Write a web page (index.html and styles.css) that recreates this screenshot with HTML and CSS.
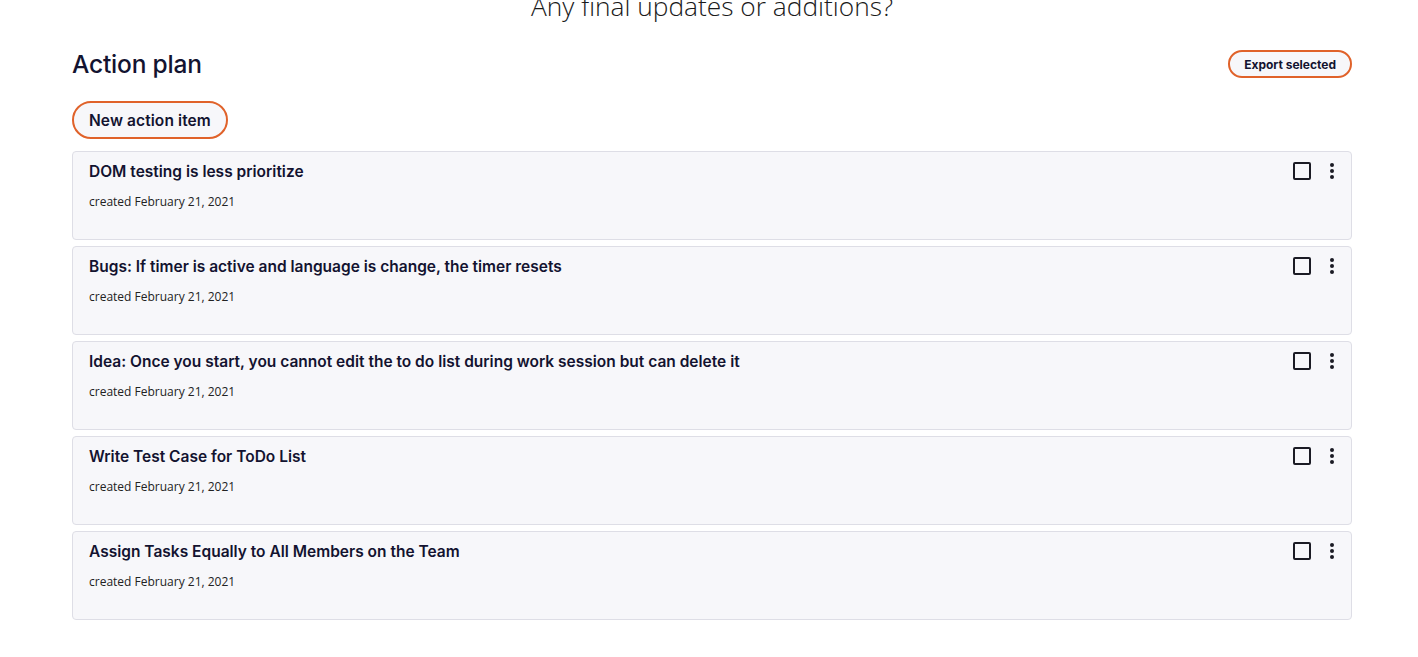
FILE: index.html
```html
<!DOCTYPE html>
<html lang="en">
<head>
<meta charset="utf-8">
<title>Action plan</title>
<link rel="stylesheet" href="styles.css">
</head>
<body>
<div class="page">
  <h2 class="question">Any final updates or additions?</h2>
  <section class="plan">
    <div class="plan-head">
      <h1 class="plan-title">Action plan</h1>
      <button class="pill pill-small">Export selected</button>
    </div>
    <button class="pill pill-large">New action item</button>
    <ul class="items">
      <li class="item">
        <div class="item-body">
          <div class="item-title">DOM testing is less prioritize</div>
          <div class="item-date">created February 21, 2021</div>
        </div>
        <div class="item-actions"><span class="check"></span><span class="kebab"><i></i><i></i><i></i></span></div>
      </li>
      <li class="item">
        <div class="item-body">
          <div class="item-title">Bugs: If timer is active and language is change, the timer resets</div>
          <div class="item-date">created February 21, 2021</div>
        </div>
        <div class="item-actions"><span class="check"></span><span class="kebab"><i></i><i></i><i></i></span></div>
      </li>
      <li class="item">
        <div class="item-body">
          <div class="item-title">Idea: Once you start, you cannot edit the to do list during work session but can delete it</div>
          <div class="item-date">created February 21, 2021</div>
        </div>
        <div class="item-actions"><span class="check"></span><span class="kebab"><i></i><i></i><i></i></span></div>
      </li>
      <li class="item">
        <div class="item-body">
          <div class="item-title">Write Test Case for ToDo List</div>
          <div class="item-date">created February 21, 2021</div>
        </div>
        <div class="item-actions"><span class="check"></span><span class="kebab"><i></i><i></i><i></i></span></div>
      </li>
      <li class="item">
        <div class="item-body">
          <div class="item-title">Assign Tasks Equally to All Members on the Team</div>
          <div class="item-date">created February 21, 2021</div>
        </div>
        <div class="item-actions"><span class="check"></span><span class="kebab"><i></i><i></i><i></i></span></div>
      </li>
    </ul>
  </section>
</div>
</body>
</html>
```

FILE: styles.css
```css
* { box-sizing: border-box; }
html, body { margin: 0; padding: 0; background: #fff; }
body { font-family: "Inter", "Liberation Sans", sans-serif; color: #131330; }
.page { padding: 0 66px 0 72px; }
.question {
  margin: -12px 0 0;
  text-align: center;
  font-family: "Open Sans", sans-serif;
  font-weight: 300;
  font-size: 26.3px;
  line-height: 36px;
  color: #1a1a1a;
}
.plan { margin-top: 26px; }
.plan-head { display: flex; justify-content: space-between; align-items: center; height: 28px; }
.plan-title { margin: 0; font-size: 24.5px; font-weight: 500; letter-spacing: -0.2px; color: #131330; }
.pill {
  font-family: inherit;
  background: #f7f7fa;
  color: #131330;
  border: 2px solid #e0622a;
  border-radius: 999px;
  cursor: pointer;
}
.pill-small { font-size: 12px; font-weight: 700; height: 28px; padding: 0 14px; }
.pill-large { margin-top: 23px; font-size: 15.5px; font-weight: 600; height: 38px; padding: 0 15px; letter-spacing: 0.1px; }
.items { list-style: none; margin: 12px 0 0; padding: 0; display: flex; flex-direction: column; gap: 6px; }
.item {
  display: flex;
  justify-content: space-between;
  height: 89px;
  background: #f7f7fa;
  border: 1px solid #dedee6;
  border-radius: 4px;
  padding: 9px 16px 0 16px;
}
.item-title { font-size: 15.5px; font-weight: 600; line-height: 21px; letter-spacing: 0; }
.item-date { margin-top: 11px; font-family: "Open Sans", sans-serif; font-size: 12px; line-height: 17px; color: #222; }
.item-actions { display: flex; align-items: flex-start; gap: 18px; padding-top: 1px; }
.check { width: 18px; height: 18px; border: 2px solid #1b1b24; border-radius: 2px; }
.kebab { display: flex; flex-direction: column; gap: 2px; width: 6px; align-items: center; padding-top: 1px; }
.kebab i { display: block; width: 4px; height: 4px; border-radius: 50%; background: #1b1b24; }
```
